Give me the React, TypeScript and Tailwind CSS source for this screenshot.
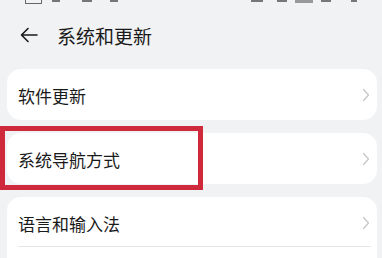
import React from "react";

function Chevron() {
  return (
    <svg width="8" height="14" viewBox="0 0 8 14" fill="none" className="shrink-0">
      <path d="M1.5 1.5 L6.5 7 L1.5 12.5" stroke="#c4c4c4" strokeWidth="1.2" strokeLinecap="round" strokeLinejoin="round" />
    </svg>
  );
}

function Row({ label, divider }: { label: string; divider?: boolean }) {
  return (
    <div className="relative flex h-[51px] items-center justify-between pl-[11px] pr-[7px]">
      <span className="pt-[1px] text-[17px] leading-none text-[#1a1a1a]">{label}</span>
      <Chevron />
      {divider && <div className="absolute bottom-[1px] left-[11px] right-[6px] h-px bg-[#e6e6e6]" />}
    </div>
  );
}

export default function App() {
  return (
    <div
      className="relative h-[258px] w-[382px] overflow-hidden bg-[#f1f2f4]"
      style={{ fontFamily: '"Noto Sans CJK SC", "Noto Sans", sans-serif' }}
    >
      {/* status bar (cut off) */}
      <div className="flex h-[6px] items-start justify-between px-[25px]">
        <div className="flex items-start gap-[10px]">
          <div className="h-[4px] w-[17px] rounded-b-[1px] border-x border-b border-[#666]" />
          <div className="h-[2px] w-[8px] bg-[#777]" />
          <div className="ml-[12px] h-[2px] w-[10px] bg-[#777]" />
          <div className="ml-[8px] h-[2px] w-[8px] bg-[#777]" />
        </div>
        <div className="flex items-start gap-[8px]">
          <div className="h-[2px] w-[12px] bg-[#777]" />
          <div className="ml-[6px] h-[2px] w-[10px] bg-[#777]" />
          <div className="h-[3px] w-[18px] bg-[#999]" />
          <div className="h-[2px] w-[10px] bg-[#777]" />
          <div className="ml-[12px] h-[2px] w-[6px] bg-[#777]" />
        </div>
      </div>

      {/* header */}
      <div className="flex h-[58px] items-center pl-[20px]">
        <svg width="18" height="16" viewBox="0 0 18 16" fill="none">
          <path d="M17 8 H2 M8 1.5 L1.5 8 L8 14.5" stroke="#1a1a1a" strokeWidth="1.6" strokeLinecap="round" strokeLinejoin="round" />
        </svg>
        <span className="ml-[19px] text-[19px] leading-none text-[#1a1a1a]">系统和更新</span>
      </div>

      {/* cards */}
      <div className="mt-[5px] flex flex-col gap-[13px] pl-[7px] pr-[5px]">
        <div className="overflow-hidden rounded-[14px] bg-white">
          <Row label="软件更新" />
        </div>
        <div className="overflow-hidden rounded-[14px] bg-white">
          <Row label="系统导航方式" />
        </div>
        <div className="h-[80px] overflow-hidden rounded-t-[14px] bg-white">
          <Row label="语言和输入法" divider />
        </div>
      </div>

      {/* red highlight annotation */}
      <div className="absolute left-0 top-[126px] h-[64px] w-[203px] border-[5px] border-[#cf2a3b]" />
    </div>
  );
}
